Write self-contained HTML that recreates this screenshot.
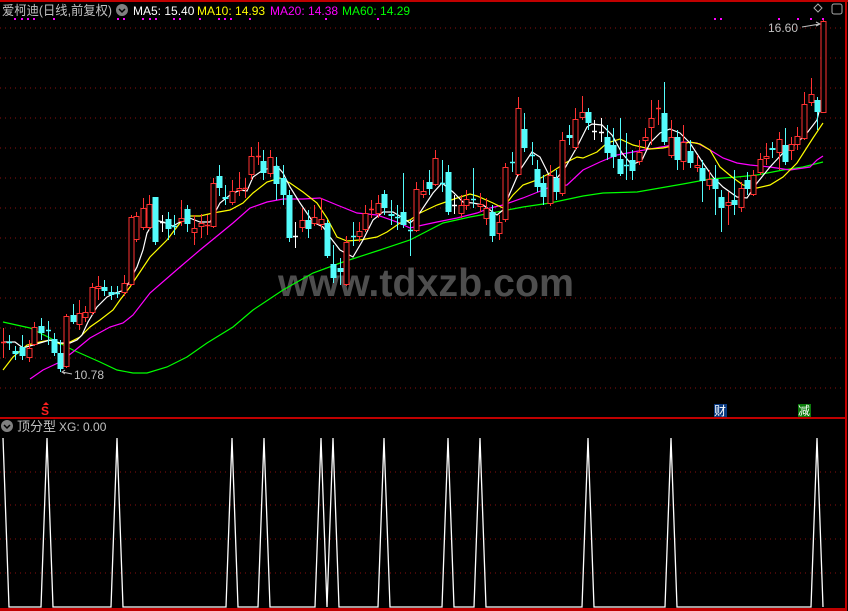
<!DOCTYPE html>
<html><head><meta charset="utf-8"><style>
html,body{margin:0;padding:0;background:#000;width:848px;height:611px;overflow:hidden}
svg{display:block}
text{font-family:"Liberation Sans","Noto Sans CJK SC",sans-serif}
</style></head><body>
<svg id="s" width="848" height="611" xmlns="http://www.w3.org/2000/svg">
<rect width="848" height="611" fill="#000"/>
<g id="grid" stroke="#8a1010" stroke-width="1" stroke-dasharray="1,4"></g>
<text x="426" y="296" font-size="39" font-weight="bold" fill="#4e4e4e" text-anchor="middle" textLength="296" lengthAdjust="spacingAndGlyphs">www.tdxzb.com</text>
<g id="ma"></g>
<g id="cd"></g>
<g id="dots" fill="#ff00ff"></g>
<rect x="0" y="0" width="848" height="2" fill="#c00000"/>
<rect x="845" y="0" width="2" height="611" fill="#c00000"/>
<rect x="0" y="417" width="846" height="2" fill="#c00000"/>
<rect x="0" y="608" width="846" height="3" fill="#c00000"/>
<text x="2" y="15" font-size="13" fill="#c0c0c0" textLength="110" lengthAdjust="spacingAndGlyphs">爱柯迪(日线,前复权)</text>
<circle cx="122" cy="10" r="6" fill="#808080"/><path d="M119 9 l3 3 l3 -3" stroke="#000" stroke-width="1.5" fill="none"/>
<text x="133" y="15" font-size="12" fill="#fff">MA5: 15.40</text>
<text x="197" y="15" font-size="12" fill="#ffff00">MA10: 14.93</text>
<text x="270" y="15" font-size="12" fill="#ff00ff">MA20: 14.38</text>
<text x="342" y="15" font-size="12" fill="#00ff00">MA60: 14.29</text>
<path d="M814 8 l4 -4 l4 4 l-4 4 z" stroke="#aaa" fill="none"/>
<rect x="832" y="4" width="10" height="10" rx="2" stroke="#aaa" fill="none"/>
<text x="768" y="32" font-size="12" fill="#c0c0c0">16.60</text>
<path d="M802 27 L820 24 M816 22 l4 2 l-4 2" stroke="#c0c0c0" fill="none"/>
<text x="74" y="379" font-size="12" fill="#c0c0c0">10.78</text>
<path d="M72 374 L62 372 M65 370 l-3 2 l3 2" stroke="#c0c0c0" fill="none"/>
<text x="41" y="415" font-size="12" font-weight="bold" fill="#ff2020">S</text>
<path d="M43 405 l3 -3 l3 3 z" fill="#ff2020"/>
<rect x="714" y="404" width="13" height="13" fill="#0a3a80"/>
<text x="714" y="415" font-size="12" fill="#fff">财</text>
<rect x="798" y="404" width="13" height="13" fill="#0a7a0a"/>
<text x="798" y="415" font-size="12" fill="#fff">减</text>
<circle cx="7" cy="426" r="6" fill="#808080"/><path d="M4 425 l3 3 l3 -3" stroke="#000" stroke-width="1.5" fill="none"/>
<text x="17" y="431" font-size="13" fill="#c0c0c0">顶分型</text>
<text x="59" y="431" font-size="12" fill="#c0c0c0">XG: 0.00</text>
<polyline id="xg" fill="none" stroke="#fff" stroke-width="1.3"/>
</svg>
<script>
var ns="http://www.w3.org/2000/svg";
function el(p,t,a){var e=document.createElementNS(ns,t);for(var k in a)e.setAttribute(k,a[k]);p.appendChild(e);return e;}
var g=document.getElementById('grid');
for(var y=28;y<=388;y+=30)el(g,'line',{x1:0,y1:y,x2:845,y2:y});
[472,505,539,573].forEach(function(y){el(g,'line',{x1:0,y1:y,x2:845,y2:y});});
var ma=document.getElementById('ma');
function pl(pts,c){el(ma,'polyline',{points:pts.map(function(p){return p.join(',')}).join(' '),fill:'none',stroke:c,'stroke-width':1.2});}
pl([[3,322],[30,328],[50,338],[73,350],[100,362],[117,370],[133,373],[147,373],[167,367],[187,357],[207,343],[233,327],[253,310],[283,290],[313,273],[343,262],[380,250],[410,240],[443,223],[470,217],[497,212],[523,207],[550,203],[583,196],[603,193],[637,192],[660,188],[683,184],[710,179],[737,177],[757,175],[783,170],[803,167],[823,162]],'#00ff00');
pl([[30,379],[43,370],[60,362],[73,352],[90,338],[110,327],[123,323],[133,315],[150,293],[180,267],[200,250],[233,223],[250,208],[267,202],[283,199],[303,199],[320,198],[337,205],[357,213],[377,215],[397,222],[410,228],[423,225],[437,222],[457,218],[477,213],[490,208],[503,205],[523,198],[543,190],[550,187],[567,185],[583,170],[600,162],[617,155],[633,152],[650,149],[667,146],[683,142],[697,143],[710,150],[723,158],[737,163],[750,165],[770,167],[790,170],[810,167],[817,160],[823,156]],'#ff00ff');
pl([[3,370],[13,357],[27,345],[40,342],[50,340],[60,344],[70,342],[80,337],[90,327],[100,320],[113,310],[120,300],[130,287],[140,272],[150,257],[167,240],[180,223],[190,216],[200,216],[213,213],[230,210],[243,203],[253,193],[267,182],[280,178],[290,183],[303,192],[317,203],[327,218],[337,237],[347,241],[360,240],[377,237],[387,232],[400,223],[410,220],[420,213],[437,205],[457,198],[470,194],[477,196],[493,203],[503,208],[513,195],[523,185],[537,180],[550,173],[567,162],[577,157],[583,158],[597,152],[607,143],[620,139],[633,145],[650,149],[663,148],[677,145],[690,142],[700,144],[710,150],[720,167],[732,177],[743,185],[757,188],[770,185],[783,177],[797,163],[813,138],[823,123]],'#ffff00');
pl([[3,342],[15,342],[23,348],[33,345],[50,340],[60,343],[70,343],[77,340],[82,335],[88,322],[97,307],[107,297],[115,293],[125,290],[130,280],[137,267],[143,250],[147,233],[155,220],[163,222],[173,226],[180,222],[187,217],[200,222],[210,222],[220,203],[230,195],[240,190],[247,191],[253,177],[263,170],[277,166],[283,173],[290,187],[300,203],[313,222],[323,227],[330,237],[340,250],[353,257],[363,240],[373,220],[383,212],[393,212],[403,218],[410,223],[417,217],[427,202],[433,193],[442,183],[453,192],[463,202],[473,203],[483,205],[497,215],[503,210],[510,193],[520,170],[532,152],[540,157],[550,177],[557,178],[565,168],[577,147],[587,127],[592,124],[602,125],[612,135],[622,153],[632,165],[642,160],[650,143],[660,133],[670,129],[680,133],[690,143],[703,163],[713,177],[723,187],[737,197],[747,198],[757,183],[770,167],[783,153],[797,143],[807,133],[817,120],[823,95]],'#ffffff');
var C=[[3,342,342,'r',328,358],[9,342,342,'c',335,350],[15,351,354,'c',346,360],[22,347,356,'c',335,360],[29,348,357,'r',340,362],[34,327,344,'r',322,346],[41,326,333,'c',318,340],[48,330,330,'c',321,345],[54,339,353,'c',333,356],[60,353,369,'c',340,372],[66,316,366,'r',314,368],[73,315,322,'c',304,324],[79,313,324,'r',300,330],[85,312,317,'r',306,322],[92,287,312,'r',283,315],[98,286,288,'r',276,300],[104,287,291,'c',280,296],[111,292,295,'c',286,300],[117,293,293,'c',286,298],[124,283,292,'r',275,296],[131,217,284,'r',215,286],[136,216,239,'r',212,242],[143,208,227,'r',198,230],[149,204,227,'r',195,230],[155,197,242,'c',197,245],[162,222,222,'w',215,232],[168,219,229,'c',212,240],[174,226,226,'c',215,235],[181,218,221,'r',200,226],[187,209,224,'c',205,232],[194,228,232,'r',215,245],[201,223,226,'r',214,238],[207,225,225,'r',215,235],[213,183,226,'r',178,228],[219,176,188,'c',165,196],[225,197,199,'c',185,205],[232,191,202,'r',180,205],[239,188,190,'r',172,196],[245,188,188,'r',178,198],[251,156,174,'r',147,180],[258,156,156,'r',142,165],[263,161,173,'c',150,180],[270,157,173,'r',150,177],[276,166,184,'c',157,200],[283,178,195,'c',165,205],[289,195,238,'c',190,242],[295,236,236,'w',222,248],[302,220,227,'r',208,232],[308,220,229,'c',210,238],[314,217,223,'r',205,226],[321,219,224,'r',198,230],[327,223,256,'c',220,258],[333,264,278,'c',245,283],[340,268,272,'c',258,285],[346,242,284,'r',236,286],[353,236,236,'c',222,246],[359,231,236,'r',222,242],[365,213,229,'r',205,232],[371,209,209,'r',200,218],[378,203,213,'r',195,218],[384,194,208,'c',190,215],[391,214,216,'c',200,225],[397,217,217,'c',205,230],[403,212,225,'c',173,228],[410,230,230,'c',220,256],[416,189,230,'r',182,232],[423,191,194,'r',180,198],[429,182,189,'c',170,195],[435,158,184,'r',150,186],[442,183,183,'c',160,192],[448,172,212,'c',165,215],[454,205,205,'w',195,214],[461,205,213,'r',195,218],[466,199,205,'r',190,210],[473,199,199,'c',168,208],[480,204,206,'r',193,212],[486,208,218,'r',198,225],[492,212,236,'c',205,242],[499,222,233,'r',215,240],[505,167,219,'r',163,222],[512,162,162,'c',152,172],[518,108,174,'r',97,176],[524,129,148,'c',113,152],[532,155,155,'c',142,165],[537,169,187,'c',160,192],[543,183,197,'c',175,205],[550,175,203,'r',165,206],[556,178,192,'c',170,200],[562,140,193,'r',132,196],[569,135,138,'c',125,145],[575,119,147,'r',108,150],[582,112,117,'r',96,120],[588,112,123,'c',108,130],[594,131,131,'w',120,140],[601,132,132,'w',118,142],[607,137,153,'c',125,160],[613,145,157,'c',128,168],[620,159,174,'c',118,176],[626,165,165,'c',133,180],[632,160,171,'c',150,180],[639,152,161,'r',140,165],[645,137,140,'r',128,150],[651,118,127,'r',100,145],[658,108,108,'r',100,125],[664,113,142,'c',82,145],[671,137,155,'r',120,158],[677,137,160,'c',130,170],[683,142,161,'r',125,170],[690,151,163,'c',140,168],[697,165,167,'r',155,172],[702,168,181,'c',160,202],[709,179,185,'r',170,190],[715,179,189,'c',165,215],[721,197,208,'c',190,232],[728,202,205,'r',192,225],[734,200,205,'c',170,215],[741,188,207,'r',182,212],[747,180,189,'c',172,195],[753,175,194,'r',170,196],[760,159,172,'r',153,175],[766,156,158,'r',143,165],[772,148,150,'c',142,158],[779,139,152,'r',132,170],[785,145,162,'c',128,165],[791,144,150,'r',137,160],[797,136,144,'r',127,150],[804,104,138,'r',92,140],[811,94,102,'r',78,106],[817,100,112,'c',97,130],[823,21,112,'r',20,113]];
var cd=document.getElementById('cd');
C.forEach(function(c){var x=c[0],col=c[3]=='r'?'#ff3232':(c[3]=='c'?'#54fcfc':'#ffffff');
 el(cd,'line',{x1:x+0.5,y1:c[4],x2:x+0.5,y2:c[5],stroke:col,'stroke-width':1});
 var h=c[2]-c[1];
 if(h<1.5){el(cd,'line',{x1:x-2,y1:c[1]+0.5,x2:x+3,y2:c[1]+0.5,stroke:col,'stroke-width':1.5});}
 else if(c[3]=='r'){el(cd,'rect',{x:x-2,y:c[1]+0.5,width:5,height:h,fill:'#000',stroke:col,'stroke-width':1});}
 else el(cd,'rect',{x:x-2.5,y:c[1],width:6,height:h,fill:col});
});
var d=document.getElementById('dots');
[15,22,28,34,54,118,124,143,150,156,174,180,200,219,225,231,250,326,378,715,721,779,798,811,823].forEach(function(x){el(d,'rect',{x:x-1,y:18,width:2,height:2});});
var peaks=[47,117,232,264,321,333,384,448,480,588,671,817],pts=[[3,438],[9,607]],T=438,B=607;
peaks.forEach(function(p,i){pts.push([p-6,B],[p,T],[p+6,B]);});
pts.push([823,607]);
pts.sort(function(a,b){return a[0]-b[0]});
document.getElementById('xg').setAttribute('points',pts.map(function(p){return p.join(',')}).join(' '));
</script>
</body></html>
